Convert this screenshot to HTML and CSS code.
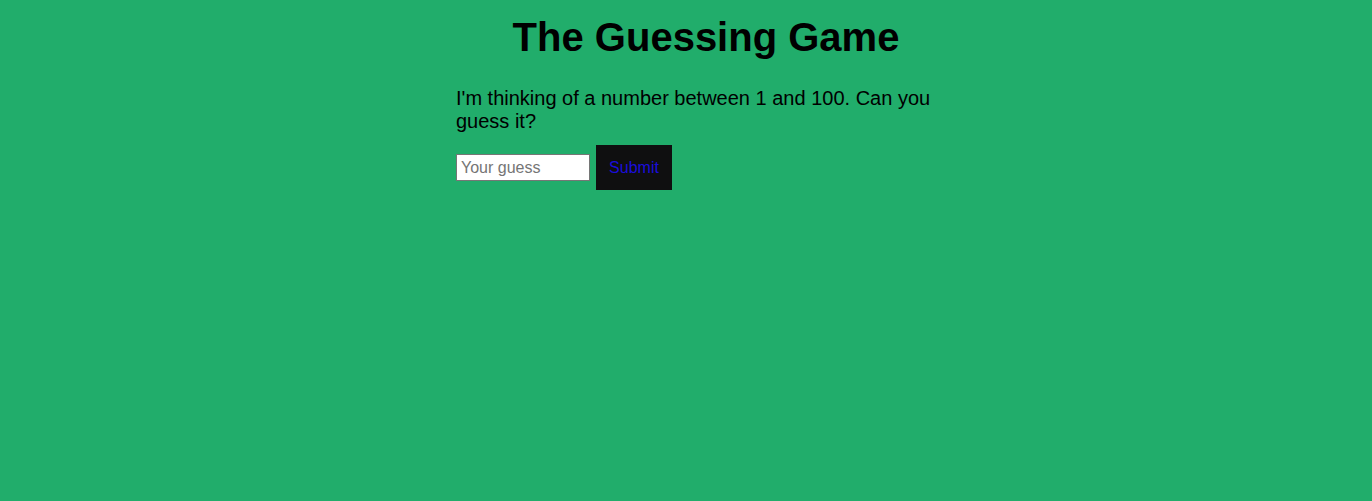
FILE: index.html
```html
<!DOCTYPE html>
<html lang="en">
<head>
<meta charset="utf-8">
<title>The Guessing Game</title>
<link rel="stylesheet" href="styles.css">
</head>
<body>
<main class="game">
  <h1 class="title">The Guessing Game</h1>
  <p class="intro">I'm thinking of a number between 1 and 100. Can you guess it?</p>
  <form class="guess-form">
    <input class="guess-input" type="text" placeholder="Your guess">
    <button class="guess-button" type="button">Submit</button>
  </form>
</main>
</body>
</html>
```
FILE: styles.css
```css
html, body {
  margin: 0;
  padding: 0;
}
body {
  background: #21ad6b;
  font-family: "Liberation Sans", Arial, sans-serif;
  color: #000;
  min-height: 501px;
}
.game {
  width: 500px;
  margin: 0 auto;
  padding-left: 40px;
}
.title {
  margin: 14px 0 27px;
  font-size: 40px;
  font-weight: bold;
  text-align: center;
  line-height: 46px;
}
.intro {
  margin: 0 0 12px;
  font-size: 20px;
  line-height: 23px;
  width: 490px;
}
.guess-form {
  display: flex;
  align-items: center;
  gap: 6px;
}
.guess-input {
  box-sizing: border-box;
  width: 134px;
  height: 27px;
  margin: 0;
  padding: 1px 4px;
  border: 1px solid #767676;
  background: #fff;
  font-family: "Liberation Sans", Arial, sans-serif;
  font-size: 16px;
}
.guess-input::placeholder {
  color: #757575;
}
.guess-button {
  box-sizing: border-box;
  width: 76px;
  height: 45px;
  margin: 0;
  padding: 0;
  border: none;
  background: #0f0f10;
  color: #1a0ddb;
  font-family: "Liberation Sans", Arial, sans-serif;
  font-size: 16px;
}
```
